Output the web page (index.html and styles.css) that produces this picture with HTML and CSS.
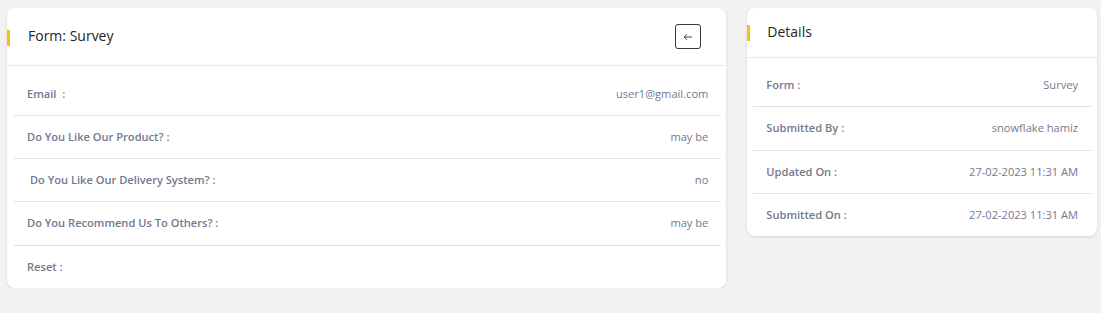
FILE: index.html
```html
<!DOCTYPE html>
<html>
<head>
<meta charset="utf-8">
<link rel="stylesheet" href="styles.css">
</head>
<body>
<div class="page">
  <section class="card card-main">
    <header class="card-head">
      <h2 class="card-title">Form: Survey</h2>
      <button class="back-btn" aria-label="Back">
        <svg width="10" height="8" viewBox="0 0 10 8"><path d="M9 4H1.5M4 1.2L1.2 4L4 6.8" fill="none" stroke="#444" stroke-width="1" /></svg>
      </button>
    </header>
    <div class="card-body">
      <div class="row"><span class="label">Email&nbsp; :</span><span class="value">user1@gmail.com</span></div>
      <div class="row"><span class="label">Do You Like Our Product? :</span><span class="value">may be</span></div>
      <div class="row"><span class="label">&nbsp;Do You Like Our Delivery System? :</span><span class="value">no</span></div>
      <div class="row"><span class="label">Do You Recommend Us To Others? :</span><span class="value">may be</span></div>
      <div class="row"><span class="label">Reset :</span><span class="value"></span></div>
    </div>
  </section>
  <section class="card card-side">
    <header class="card-head">
      <h2 class="card-title">Details</h2>
    </header>
    <div class="card-body">
      <div class="row"><span class="label">Form :</span><span class="value">Survey</span></div>
      <div class="row"><span class="label">Submitted By :</span><span class="value">snowflake hamiz</span></div>
      <div class="row"><span class="label">Updated On :</span><span class="value">27-02-2023 11:31 AM</span></div>
      <div class="row"><span class="label">Submitted On :</span><span class="value">27-02-2023 11:31 AM</span></div>
    </div>
  </section>
</div>
</body>
</html>
```

FILE: styles.css
```css
* { box-sizing: border-box; }
html, body { margin: 0; padding: 0; }
body {
  background: #f2f2f2;
  font-family: "Open Sans", "Noto Sans", sans-serif;
  color: #74788d;
}
.page {
  display: flex;
  align-items: flex-start;
  gap: 21px;
  padding: 8px 4px 0 7px;
}
.card {
  background: #fff;
  border-radius: 8px;
  box-shadow: 0 1px 3px rgba(0,0,0,0.12);
}
.card-main { width: 720px; }
.card-side { width: 350px; }
.card-head {
  position: relative;
  display: flex;
  align-items: center;
  justify-content: space-between;
  padding: 16px 25px 16px 21px;
  border-bottom: 1px solid #e9e9ec;
}
.card-side .card-head { padding: 15px 20px; }
.card-head::before {
  content: "";
  position: absolute;
  left: 0;
  top: 50%;
  width: 3px;
  height: 16px;
  margin-top: -8px;
  background: #f5c20c;
}
.card-main .card-head::before { margin-top: -7px; }
.card-title {
  margin: 0;
  padding-bottom: 2px;
  font-size: 14px;
  line-height: 17px;
  font-weight: 400;
  color: #212529;
}
.back-btn {
  width: 26px;
  height: 25px;
  padding: 0;
  border: 1px solid #343a40;
  border-radius: 3px;
  background: #fff;
  display: flex;
  align-items: center;
  justify-content: center;
}
.card-body {
  padding: 6.5px 5px 0 7px;
}
.card-side .card-body { padding: 6px 6px 0; }
.row {
  display: flex;
  justify-content: space-between;
  align-items: center;
  padding: 12px 13px;
  line-height: 18.3px;
  font-size: 11.1px;
  border-bottom: 1px solid #e0e0e0;
}
.row:last-child { border-bottom: none; }
.label { font-weight: 600; color: #74788d; }
.value { font-weight: 400; color: #74788d; }
```
